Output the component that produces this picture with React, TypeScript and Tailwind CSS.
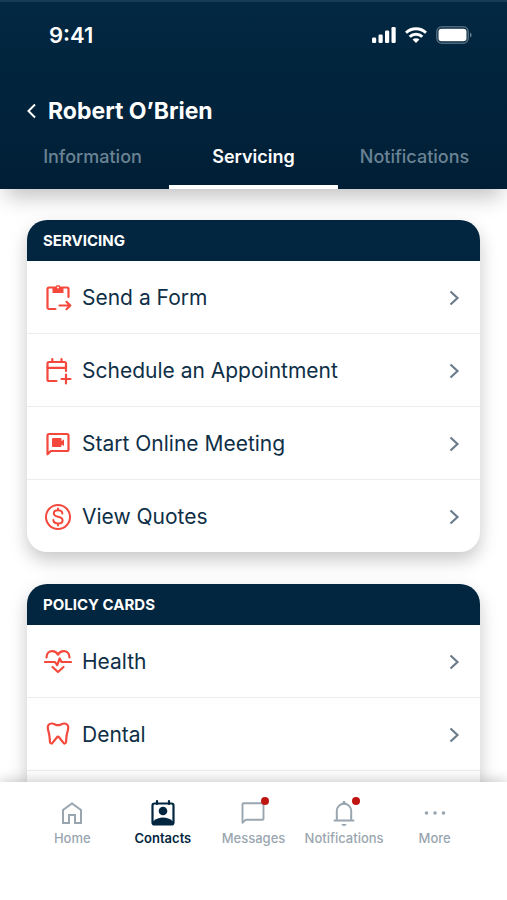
import type { ReactNode } from 'react';
import clsx from 'clsx';

// tabs of the contact page
const TABS = ['Information', 'Servicing', 'Notifications'];

interface IconProps {
  children: ReactNode;
  strokeWidth?: number;
}

function Icon({ children, strokeWidth = 2.2 }: IconProps) {
  return (
    <svg
      className="size-7 shrink-0"
      viewBox="0 0 28 28"
      fill="none"
      stroke="currentColor"
      strokeWidth={strokeWidth}
      strokeLinecap="round"
      strokeLinejoin="round"
      aria-hidden="true"
    >
      {children}
    </svg>
  );
}

const FormIcon = () => (
  <Icon>
    <path d="M11.5 25H5a1.5 1.5 0 0 1-1.5-1.5V5A1.5 1.5 0 0 1 5 3.5h18A1.5 1.5 0 0 1 24.5 5v8" />
    <path d="M8.5 3.5h11V9h-11z" fill="currentColor" stroke="none" />
    <circle cx="14" cy="3.5" r="1.7" fill="white" strokeWidth="1.5" />
    <path d="M15.5 21.5H26M22.5 17.8l3.8 3.7-3.8 3.7" />
  </Icon>
);

const CalendarIcon = () => (
  <Icon>
    <path d="M12.5 24H5a1.5 1.5 0 0 1-1.5-1.5v-16A1.5 1.5 0 0 1 5 5h15.5A1.5 1.5 0 0 1 22 6.5V14" />
    <path d="M3.5 10.8H22M8.3 2v3M17.5 2v3M22 17.5v9M17.5 22h9" />
  </Icon>
);

const MeetingIcon = () => (
  <Icon>
    <path d="M3.5 24.3V5.5A1.5 1.5 0 0 1 5 4h18a1.5 1.5 0 0 1 1.5 1.5v14A1.5 1.5 0 0 1 23 21H6.8z" />
    <path
      d="M9 8h7.5a1 1 0 0 1 1 1v2L20 9.5V16l-2.5-1.5V16a1 1 0 0 1-1 1H9a1 1 0 0 1-1-1V9a1 1 0 0 1 1-1z"
      fill="currentColor"
      stroke="none"
    />
  </Icon>
);

const QuoteIcon = () => (
  <Icon strokeWidth={2}>
    <circle cx="14" cy="14" r="12" />
    <path d="M18.4 10.5c-.3-2-2-3.2-4.4-3.2s-4.2 1.2-4.2 3.1c0 4.5 8.8 2.3 8.8 6.8 0 2-1.9 3.3-4.5 3.3s-4.5-1.3-4.7-3.4M14 5.5v1.8M14 20.6v1.9" />
  </Icon>
);

const HealthIcon = () => (
  <Icon>
    <path d="M2.5 9.5C2.5 5.5 5 3.2 8.3 3.2c2.4 0 4.4 1.2 5.7 3.5 1.3-2.3 3.3-3.5 5.7-3.5 3.3 0 5.8 2.3 5.8 6.3" />
    <path d="M1 14h10l2.2 3.2 2.5-6.700L17.5 14H27" />
    <path d="M8.5 19l5.5 5 5.5-5" />
  </Icon>
);

const ToothIcon = () => (
  <Icon>
    <path d="M14 4.2c2.5 0 3.5-1.7 6.3-1.7 2.9 0 4.2 2 3.9 4.7-.3 3-1.5 5.3-1.7 8.3l-.5 5.7c-.2 1.6-2 1.8-2.7.4L15 16.3c-.5-.9-1.5-.9-2 0l-4.300 5.300c-.7 1.4-2.5 1.2-2.7-.4L5.5 15.5c-.2-3-1.4-5.3-1.7-8.3-.3-2.7 1-4.7 3.9-4.7 2.8 0 3.8 1.7 6.3 1.7z" />
  </Icon>
);

const HomeIcon = () => (
  <Icon strokeWidth={2}>
    <path d="M5 24V11l9-6.5 9 6.5v13h-6v-8h-6v8z" strokeLinejoin="miter" />
  </Icon>
);

const ContactsIcon = () => (
  <Icon>
    <path d="M8 2v3M20 2v3" />
    <rect x="3.5" y="4.5" width="21" height="21" rx="2" />
    <circle cx="14" cy="12" r="4.3" fill="currentColor" stroke="none" />
    <path d="M4 25v-2.5c3-3 6.5-4 10-4s7 1 10 4V25z" fill="currentColor" stroke="none" />
  </Icon>
);

const MessagesIcon = () => (
  <Icon strokeWidth={1.9}>
    <path d="M3.5 23.8V5.2a1 1 0 0 1 1-1h19a1 1 0 0 1 1 1v14.6a1 1 0 0 1-1 1h-17z" />
  </Icon>
);

const BellIcon = () => (
  <Icon strokeWidth={2}>
    <path d="M6.8 21.5V12a7.2 7.2 0 0 1 14.4 0v9.5M4.5 21.5h19" />
    <path d="M14 4v-.7" strokeWidth="3" />
    <path d="M11.5 25h5a2.5 2 0 0 1-5 0z" fill="currentColor" stroke="none" />
  </Icon>
);

const MoreIcon = () => (
  <Icon>
    <g fill="currentColor" stroke="none">
      <circle cx="5.5" cy="14" r="1.8" />
      <circle cx="14" cy="14" r="1.8" />
      <circle cx="22.5" cy="14" r="1.8" />
    </g>
  </Icon>
);

interface MenuItem {
  label: string;
  icon: ReactNode;
}

const SERVICING_ITEMS: MenuItem[] = [
  { label: 'Send a Form', icon: <FormIcon /> },
  { label: 'Schedule an Appointment', icon: <CalendarIcon /> },
  { label: 'Start Online Meeting', icon: <MeetingIcon /> },
  { label: 'View Quotes', icon: <QuoteIcon /> },
];

const POLICY_ITEMS: MenuItem[] = [
  { label: 'Health', icon: <HealthIcon /> },
  { label: 'Dental', icon: <ToothIcon /> },
];

const NAV_ITEMS = [
  { label: 'Home', icon: <HomeIcon /> },
  { label: 'Contacts', icon: <ContactsIcon />, active: true },
  { label: 'Messages', icon: <MessagesIcon />, unread: true },
  { label: 'Notifications', icon: <BellIcon />, unread: true },
  { label: 'More', icon: <MoreIcon /> },
];

function StatusBar() {
  return (
    <div className="flex h-[66px] items-center justify-between pr-[35px] pl-[49px] text-white">
      <span className="text-[22px] font-semibold">9:41</span>
      <div className="flex items-center gap-[9px]">
        {/* signal */}
        <svg className="h-4 w-6" viewBox="0 0 24 16" fill="currentColor" aria-hidden="true">
          <rect x="0" y="10.5" width="4.2" height="5.5" rx="1.3" />
          <rect x="6.5" y="7.5" width="4.2" height="8.5" rx="1.3" />
          <rect x="13" y="3.5" width="4.2" height="12.5" rx="1.3" />
          <rect x="19.5" y="0" width="4.2" height="16" rx="1.3" />
        </svg>
        {/* wifi */}
        <svg
          className="h-4 w-[22px]"
          viewBox="0 0 22 16"
          fill="none"
          stroke="currentColor"
          strokeWidth="3"
          aria-hidden="true"
        >
          <path d="M1 5.8a14.3 14.3 0 0 1 20 0M4.7 9.8a9 9 0 0 1 12.6 0" />
          <path d="M11 16l-3.4-3.5a4.9 4.9 0 0 1 6.8 0z" fill="currentColor" stroke="none" />
        </svg>
        {/* battery */}
        <svg className="h-[18px] w-9" viewBox="0 0 36 18" fill="none" aria-hidden="true">
          <rect x="0.8" y="0.8" width="31.4" height="16.4" rx="5" stroke="#fff" strokeOpacity="0.3" strokeWidth="1.6" />
          <rect x="2.5" y="2.7" width="28" height="12.6" rx="3" fill="#fff" />
          <path d="M34 6.5v5c1-.4 1.6-1.4 1.6-2.5S35 6.900 34 6.500z" fill="#fff" fillOpacity="0.4" />
        </svg>
      </div>
    </div>
  );
}

function Header() {
  return (
    <header className="relative z-10 border-t-2 border-[#183b57] bg-linear-to-b from-[#032842] to-[#001f36] shadow-[0_14px_20px_-6px_rgba(0,0,0,0.24)]">
      <StatusBar />
      <div className="flex items-center gap-3 px-[27px] pt-[27px]">
        <button type="button" aria-label="Back" className="text-white">
          <svg
            className="h-4 w-[9px]"
            viewBox="0 0 9 16"
            fill="none"
            stroke="currentColor"
            strokeWidth="2"
            aria-hidden="true"
          >
            <path d="M8 1.5L1.5 8 8 14.5" />
          </svg>
        </button>
        <h1 className="text-[23px] leading-8 font-bold text-white">Robert O’Brien</h1>
      </div>
      <div role="tablist" className="grid grid-cols-3 pt-2">
        {TABS.map(tab => (
          <button
            key={tab}
            type="button"
            role="tab"
            aria-selected={tab === 'Servicing'}
            className={clsx(
              'border-b-4 pt-[11px] pb-[17px] text-lg leading-[22px]',
              tab === 'Information' && 'pl-4',
              tab === 'Notifications' && 'pr-4',
              tab === 'Servicing'
                ? 'border-white font-semibold text-white'
                : 'border-transparent font-medium text-[#6b8394]',
            )}
          >
            {tab}
          </button>
        ))}
      </div>
    </header>
  );
}

interface MenuCardProps {
  title: string;
  items: MenuItem[];
  // the list runs on below the bottom bar
  continues?: boolean;
}

function MenuCard({ title, items, continues }: MenuCardProps) {
  return (
    <section
      className={clsx(
        'bg-white shadow-[0_8px_18px_rgba(0,0,0,0.22)]',
        continues ? 'grow rounded-t-[20px]' : 'rounded-[20px]',
      )}
    >
      <h2 className="rounded-t-[20px] bg-[#032640] px-4 text-[15px] leading-[41px] font-bold text-white uppercase">
        {title}
      </h2>
      <ul className={clsx('divide-y divide-[#ececec]', continues && 'border-b border-[#ececec]')}>
        {items.map(item => (
          <li key={item.label}>
            <button
              type="button"
              className="flex h-[72px] w-full items-center gap-[10px] pt-px pr-5 pl-[17px] text-left text-[#0f2f47]"
            >
              <span className="text-[#f4483c]">{item.icon}</span>
              <span className="grow text-[21px] leading-8">{item.label}</span>
              <svg
                className="h-4 w-3 text-[#6c7c8b]"
                viewBox="0 0 12 16"
                fill="none"
                stroke="currentColor"
                strokeWidth="2.2"
                aria-hidden="true"
              >
                <path d="M2.5 1.5l7 6.5-7 6.5" />
              </svg>
            </button>
          </li>
        ))}
      </ul>
    </section>
  );
}

function BottomNav() {
  return (
    <nav className="relative z-10 flex bg-white px-[27px] pt-[17px] pb-[54px] shadow-[0_-2px_12px_rgba(0,0,0,0.2)]">
      {NAV_ITEMS.map(item => (
        <a
          key={item.label}
          href="#"
          className={clsx(
            'flex flex-1 basis-0 flex-col items-center gap-[3px] text-[13px] leading-4',
            item.active ? 'font-semibold text-[#032640]' : 'font-medium text-[#9aa6af]',
          )}
        >
          <span className="relative">
            {item.icon}
            {item.unread && <span className="absolute -top-0.5 -right-0.5 size-2 rounded-full bg-[#bf1512]" />}
          </span>
          {item.label}
        </a>
      ))}
    </nav>
  );
}

export default function App() {
  return (
    <div className="flex h-screen flex-col overflow-hidden bg-white font-['Inter',sans-serif]">
      <Header />
      <main className="flex min-h-0 grow flex-col gap-8 overflow-y-auto px-[27px] pt-[31px] [scrollbar-width:none]">
        <MenuCard title="Servicing" items={SERVICING_ITEMS} />
        <MenuCard title="Policy Cards" items={POLICY_ITEMS} continues />
      </main>
      <BottomNav />
    </div>
  );
}
